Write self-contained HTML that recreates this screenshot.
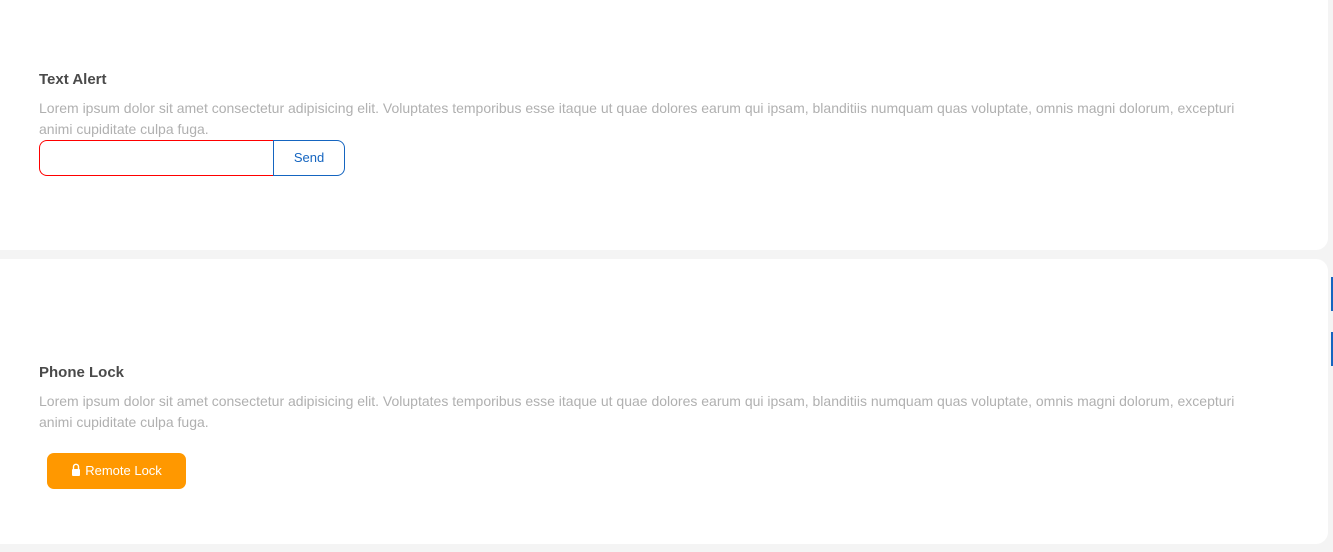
<!DOCTYPE html>
<html><head><style>
html,body{margin:0;padding:0;width:1333px;height:552px;overflow:hidden;background:#f4f4f4;font-family:"Liberation Sans",sans-serif;position:relative}
.card{position:absolute;left:0;width:1328px;background:#fff;border-radius:0 12px 12px 0;}
h3{position:absolute;left:39px;margin:0;font-size:15px;font-weight:bold;color:#4a4a4a}
p{position:absolute;left:39px;margin:0;width:1220px;font-size:14px;line-height:21px;color:#b0b0b0}
.inp{position:absolute;left:39px;top:140px;width:233px;height:34px;border:1px solid #f00;border-right:none;border-radius:8px 0 0 8px}
.send{position:absolute;left:273px;top:140px;width:70px;height:34px;border:1px solid #1565c0;border-radius:0 8px 8px 0;color:#1565c0;font-size:13px;text-align:center;line-height:34px}
.btn{position:absolute;left:47px;top:453px;width:139px;height:36px;background:#ff9800;border-radius:7px;color:#fff;font-size:13px;line-height:36px;text-align:center}
.bar{position:absolute;left:1331px;width:2px;height:34px;background:#1565c0}
</style></head><body>
<div class="card" style="top:-10px;height:260px;border-radius:0 0 12px 0"></div>
<div class="card" style="top:259px;height:285px;border-radius:0 12px 12px 0"></div>
<div class="bar" style="top:277px"></div>
<div class="bar" style="top:332px"></div>
<h3 style="top:71px">Text Alert</h3>
<p style="top:98px">Lorem ipsum dolor sit amet consectetur adipisicing elit. Voluptates temporibus esse itaque ut quae dolores earum qui ipsam, blanditiis numquam quas voluptate, omnis magni dolorum, excepturi animi cupiditate culpa fuga.</p>
<div class="inp"></div><div class="send">Send</div>
<h3 style="top:364px">Phone Lock</h3>
<p style="top:391px">Lorem ipsum dolor sit amet consectetur adipisicing elit. Voluptates temporibus esse itaque ut quae dolores earum qui ipsam, blanditiis numquam quas voluptate, omnis magni dolorum, excepturi animi cupiditate culpa fuga.</p>
<div class="btn"><svg width="10" height="13" viewBox="0 0 10 13" style="vertical-align:-1px;margin-right:4px"><path d="M2.5 6V3.8a2.5 2.5 0 0 1 5 0V6" fill="none" stroke="#fff" stroke-width="1.4"/><rect x="1" y="6" width="8" height="7" rx="1" fill="#fff"/></svg>Remote Lock</div>
</body></html>
